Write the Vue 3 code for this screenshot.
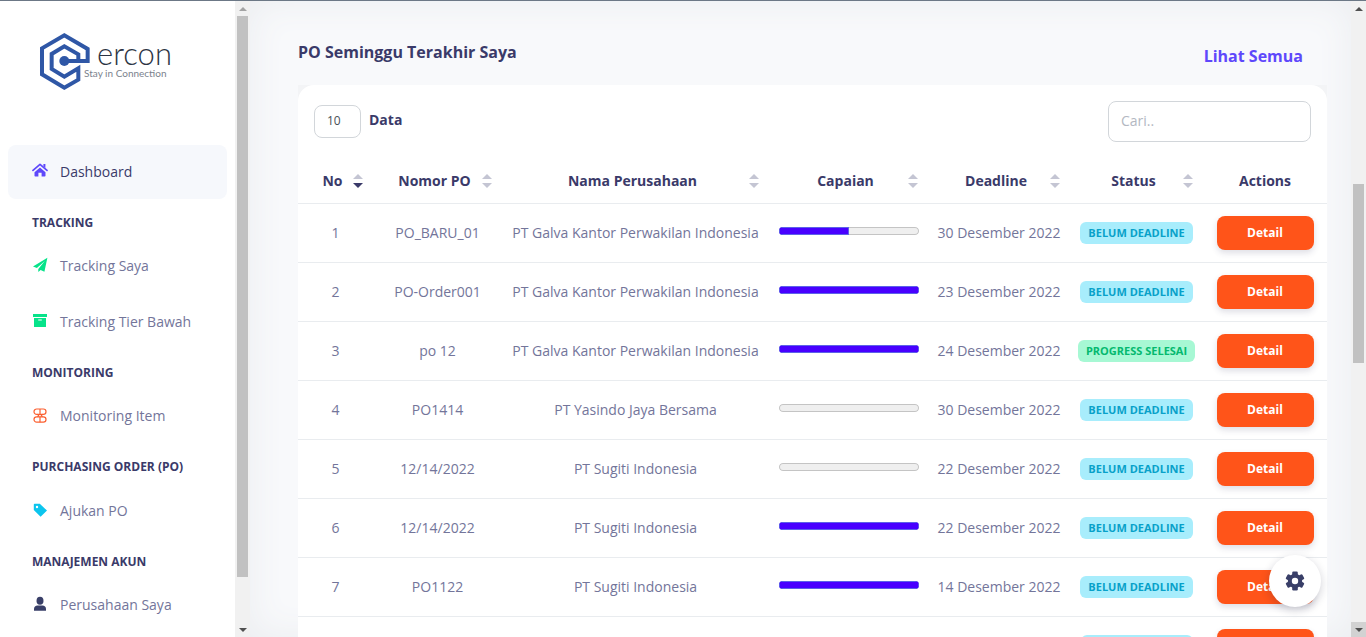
<script setup>
import { ref } from 'vue'

const pageSize = ref('10')
const search = ref('')

const groups = [
  { title: '', items: [{ label: 'Dashboard', icon: 'home', active: true }] },
  {
    title: 'Tracking',
    items: [
      { label: 'Tracking Saya', icon: 'plane' },
      { label: 'Tracking Tier Bawah', icon: 'box' },
    ],
  },
  { title: 'Monitoring', items: [{ label: 'Monitoring Item', icon: 'grid' }] },
  { title: 'Purchasing Order (PO)', items: [{ label: 'Ajukan PO', icon: 'tag' }] },
  { title: 'Manajemen Akun', items: [{ label: 'Perusahaan Saya', icon: 'user' }] },
]

const columns = [
  { key: 'no', label: 'No', sorted: true },
  { key: 'po', label: 'Nomor PO' },
  { key: 'company', label: 'Nama Perusahaan' },
  { key: 'progress', label: 'Capaian' },
  { key: 'deadline', label: 'Deadline' },
  { key: 'status', label: 'Status' },
  { key: 'actions', label: 'Actions', plain: true },
]

const galva = 'PT Galva Kantor Perwakilan Indonesia'
const rows = [
  { no: 1, po: 'PO_BARU_01', company: galva, value: 50, deadline: '30 Desember 2022' },
  { no: 2, po: 'PO-Order001', company: galva, value: 100, deadline: '23 Desember 2022' },
  { no: 3, po: 'po 12', company: galva, value: 100, deadline: '24 Desember 2022', done: true },
  { no: 4, po: 'PO1414', company: 'PT Yasindo Jaya Bersama', value: 0, deadline: '30 Desember 2022' },
  { no: 5, po: '12/14/2022', company: 'PT Sugiti Indonesia', value: 0, deadline: '22 Desember 2022' },
  { no: 6, po: '12/14/2022', company: 'PT Sugiti Indonesia', value: 100, deadline: '22 Desember 2022' },
  { no: 7, po: 'PO1122', company: 'PT Sugiti Indonesia', value: 100, deadline: '14 Desember 2022' },
]
</script>

<template>
  <div class="page">
    <aside class="sidebar">
      <div class="side-body">
        <a href="#" class="brand" aria-label="ercon">
          <svg width="132" height="58" viewBox="0 0 132 58">
            <g transform="translate(-20 -8) scale(0.3333)" fill="none" stroke="#2f57a6" stroke-width="12">
              <path d="M133 108H203V72L133 31L66 70V148L133 188L175 164V130L133 155L95 132V87L133 64L175 88V108" />
              <circle cx="133" cy="108" r="15" fill="#2f57a6" stroke="none" />
            </g>
            <text x="57" y="32" class="brand-name">ercon</text>
            <text x="44" y="44" class="brand-sub">Stay in Connection</text>
          </svg>
        </a>
        <nav class="menu">
          <section v-for="g in groups" :key="g.title" class="group">
            <h6 v-if="g.title">{{ g.title }}</h6>
            <a v-for="i in g.items" :key="i.label" href="#" class="item" :class="{ active: i.active }">
              <svg v-if="i.icon === 'home'" class="icon" viewBox="0 0 16 16" fill="#5e48fb">
                <path d="M8 4.600 13.500 9.200V12.800a.8.8 0 0 1-.8.8H9.600V9.800H6.400v3.800H3.300a.8.8 0 0 1-.8-.8V9.200z" />
                <path d="M11.400 1h2v4l-2-1.800z" />
                <path d="M1 7.400 8 1.400l7 6" fill="none" stroke="#5e48fb" stroke-width="1.700" stroke-linecap="round" stroke-linejoin="round" />
              </svg>
              <svg v-else-if="i.icon === 'plane'" class="icon" viewBox="0 0 16 16" fill="#06e38a">
                <path d="M15.400.8 1 9.400l3.900 1.600L12.800 4 6.300 12V15l2.300-2 3.800 1.700z" />
              </svg>
              <svg v-else-if="i.icon === 'box'" class="icon" viewBox="0 0 16 16" fill="#06e38a">
                <path d="M1 1h14v3H1zM2 5h12v8.500a.6.6 0 0 1-.6.6H2.600a.6.6 0 0 1-.6-.6zM6.200 6.600v1h3.600v-1z" fill-rule="evenodd" />
              </svg>
              <svg v-else-if="i.icon === 'grid'" class="icon" viewBox="0 0 16 16" fill="none" stroke="#fb6132" stroke-width="1.200">
                <rect x="2" y="2" width="12" height="5.400" rx="2.700" />
                <rect x="2" y="9.800" width="12" height="5.400" rx="2.700" />
                <path d="M8 2v5.400M8 9.800v5.400M5.400 7.400Q8 8.600 5.400 9.800M10.600 7.400Q8 8.600 10.600 9.800" />
              </svg>
              <svg v-else-if="i.icon === 'tag'" class="icon" viewBox="0 0 16 16" fill="#0cc5ee">
                <path d="M1.800 2.500a.8.8 0 0 1 .8-.8h5.200L15 8.600 8.600 14.800 1.800 8zM5 3.800a1.200 1.200 0 1 0 0 2.400 1.200 1.200 0 0 0 0-2.400z" fill-rule="evenodd" />
              </svg>
              <svg v-else class="icon" viewBox="0 0 16 16" fill="#393f68">
                <ellipse cx="8" cy="4.800" rx="3.500" ry="4" />
                <path d="M2 14.800v-2c0-2 1.500-3.300 3.500-3.300h5c2 0 3.500 1.300 3.500 3.300v2z" />
              </svg>
              <span>{{ i.label }}</span>
            </a>
          </section>
        </nav>
      </div>
      <div class="scroll side-scroll" aria-hidden="true">
        <i class="arrow up muted"></i>
        <div class="track"><div class="thumb"></div></div>
        <i class="arrow down"></i>
      </div>
    </aside>

    <main class="content">
      <header class="title-row">
        <h1>PO Seminggu Terakhir Saya</h1>
        <a href="#">Lihat Semua</a>
      </header>

      <div class="panel-wrap">
        <div class="panel">
          <div class="tools">
            <div class="length">
              <select id="page-size" v-model="pageSize">
                <option>10</option>
                <option>25</option>
                <option>50</option>
              </select>
              <label for="page-size">Data</label>
            </div>
            <input v-model="search" type="search" placeholder="Cari.." aria-label="Cari" />
          </div>

          <table>
            <colgroup>
              <col v-for="c in columns" :key="c.key" :class="'c-' + c.key" />
            </colgroup>
            <thead>
              <tr>
                <th v-for="c in columns" :key="c.key" scope="col" :class="{ plain: c.plain }">
                  {{ c.label }}
                  <span v-if="!c.plain" class="sort" :class="{ sorted: c.sorted }" aria-hidden="true"></span>
                </th>
              </tr>
            </thead>
            <tbody>
              <tr v-for="r in rows" :key="r.no">
                <td>{{ r.no }}</td>
                <td>{{ r.po }}</td>
                <td>{{ r.company }}</td>
                <td><progress :value="r.value" max="100" :aria-label="'Capaian ' + r.po"></progress></td>
                <td>{{ r.deadline }}</td>
                <td>
                  <span class="badge" :class="{ done: r.done }">{{ r.done ? 'Progress Selesai' : 'Belum Deadline' }}</span>
                </td>
                <td><button type="button" class="detail">Detail</button></td>
              </tr>
              <tr>
                <td></td>
                <td></td>
                <td></td>
                <td></td>
                <td></td>
                <td><span class="badge blank"></span></td>
                <td><button type="button" class="detail" aria-label="Detail"></button></td>
              </tr>
            </tbody>
          </table>
        </div>
      </div>
    </main>

    <div class="scroll page-scroll" aria-hidden="true">
      <i class="arrow up"></i>
      <div class="track"><div class="thumb"></div></div>
      <i class="arrow down pressed"></i>
    </div>

    <button type="button" class="settings" aria-label="Pengaturan">
      <svg width="20" height="20" viewBox="0 0 20 20">
        <g fill="#393f68">
          <rect v-for="a in [0, 60, 120]" :key="a" x="7.200" y="0.500" width="5.600" height="19" rx="1.200" :transform="`rotate(${a} 10 10)`" />
          <circle cx="10" cy="10" r="7.200" />
        </g>
        <circle cx="10" cy="10" r="3.200" fill="#fff" />
      </svg>
    </button>
  </div>
</template>

<style>
body {
  margin: 0;
  overflow: hidden;
}
</style>

<style scoped>
.page {
  box-sizing: border-box;
  display: flex;
  height: 100vh;
  overflow: hidden;
  border-top: 1px solid #6c7886;
  background: #f8f9fb;
  color: #73759a;
  font-family: "Open Sans", "Noto Sans", sans-serif;
  font-size: 14px;
  line-height: 20px;
}
a {
  text-decoration: none;
}
.sidebar {
  display: flex;
  flex: none;
  width: 250px;
  background: #fff;
}
.side-body {
  flex: 1;
  min-width: 0;
  overflow: hidden;
}
.brand {
  display: block;
  padding: 32px 0 54px 40px;
}
.brand svg {
  display: block;
  overflow: visible;
}
.brand-name {
  font: 300 31px Lato, sans-serif;
  fill: #2c3444;
}
.brand-sub {
  font: 400 10px Lato, sans-serif;
  fill: #7b828d;
}
.menu {
  padding: 0 8px;
}
.group h6 {
  margin: 0;
  padding: 14px 24px 7px;
  color: #3a3a69;
  font-size: 12px;
  font-weight: 700;
  line-height: 1.6;
  text-transform: uppercase;
}
.item {
  display: flex;
  align-items: center;
  gap: 12px;
  height: 54px;
  padding: 0 24px;
  border-radius: 8px;
  color: #73759a;
}
.item + .item {
  margin-top: 2px;
}
.item.active {
  background: #f6f8fc;
  color: #3a3a69;
  font-weight: 500;
}
.icon {
  flex: none;
  width: 16px;
  height: 16px;
  margin-bottom: 2px;
}
.scroll {
  display: flex;
  flex: none;
  flex-direction: column;
  width: 15px;
  background: #f1f1f1;
}
.arrow {
  display: flex;
  align-items: center;
  justify-content: center;
  height: 15px;
}
.arrow::before {
  content: "";
  border: 4px solid transparent;
}
.arrow.up::before {
  border-top: 0;
  border-bottom-color: #505050;
}
.arrow.down::before {
  border-bottom: 0;
  border-top-color: #505050;
}
.arrow.muted::before {
  border-bottom-color: #a3a3a3;
}
.arrow.pressed {
  background: #d2d2d2;
}
.track {
  flex: 1;
  padding: 0 2px;
}
.thumb {
  height: 92.5%;
  background: #c1c1c1;
}
.page-scroll .track {
  display: flex;
  flex-direction: column;
}
.page-scroll .thumb {
  height: 29.5%;
}
.page-scroll .track::before {
  content: "";
  height: 27.7%;
}
.content {
  flex: 1;
  min-width: 0;
  padding: 0 24px 0 48px;
  overflow: hidden;
  box-shadow: inset 0 0 36px #ebedf0;
}
.title-row {
  display: flex;
  align-items: flex-start;
  justify-content: space-between;
  height: 84px;
  padding-right: 24px;
  box-sizing: border-box;
  font-size: 16px;
  line-height: 24px;
}
.title-row h1 {
  margin: 39px 0 0;
  color: #3a3a69;
  font-size: 16px;
  font-weight: 700;
}
.title-row a {
  margin-top: 43px;
  color: #5e48fb;
  font-weight: 700;
}
.panel-wrap {
  background: #f3f4f6;
}
.panel {
  border-radius: 16px;
  background: #fff;
  overflow: hidden;
}
.tools {
  display: flex;
  align-items: flex-start;
  justify-content: space-between;
  padding: 16px 16px 0;
}
.length {
  display: flex;
  align-items: center;
  gap: 8px;
  padding-top: 4px;
}
.length select {
  box-sizing: border-box;
  width: 47px;
  height: 33px;
  padding: 0 12px 2px;
  border: 1px solid #d2d6da;
  border-radius: 8px;
  appearance: none;
  background: #fff;
  color: #495057;
  font: 12px "Open Sans", sans-serif;
}
.length label {
  padding-bottom: 3px;
  color: #3a3a69;
  font-weight: 700;
}
.tools input {
  box-sizing: border-box;
  width: 203px;
  height: 41px;
  padding: 0 12px 2px;
  border: 1px solid #d2d6da;
  border-radius: 8px;
  appearance: none;
  background: #fff;
  color: #495057;
  font: 14px "Open Sans", sans-serif;
}
.tools input::placeholder {
  color: #b3b8c2;
}
table {
  width: 100%;
  margin-top: 16px;
  border-collapse: separate;
  border-spacing: 0;
  table-layout: fixed;
}
.c-no { width: 75px; }
.c-po { width: 129px; }
.c-company { width: 267px; }
.c-progress { width: 159px; }
.c-deadline { width: 142px; }
.c-status { width: 133px; }
.c-actions { width: 124px; }
th {
  position: relative;
  height: 45px;
  padding: 0 30px 0 24px;
  border-bottom: 1px solid #e9ecef;
  color: #3a3a69;
  font-weight: 700;
  white-space: nowrap;
}
th.plain {
  padding: 0 10px;
}
.sort {
  position: absolute;
  top: 16px;
  right: 10px;
  display: flex;
  flex-direction: column;
  gap: 4px;
}
.sort::before,
.sort::after {
  content: "";
  border: 5px solid transparent;
}
.sort::before {
  border-top: 0;
  border-bottom-color: #c4c5d3;
}
.sort::after {
  border-bottom: 0;
  border-top-color: #c4c5d3;
}
.sort.sorted::after {
  border-top-color: #3a3a69;
}
td {
  height: 58px;
  padding: 0;
  border-bottom: 1px solid #e9ecef;
  text-align: center;
  white-space: nowrap;
}
progress {
  display: block;
  width: 140px;
  height: 8px;
  margin: 0 auto 4px;
  border: 0;
  border-radius: 4px;
  appearance: none;
  overflow: hidden;
}
progress::-webkit-progress-bar {
  border-radius: 4px;
  background: #efefef;
  box-shadow: inset 0 0 0 1px #c4c4c4;
}
progress::-webkit-progress-value {
  background: #4800ff;
  box-shadow: inset 0 0 0 1px #5c62e8;
}
.badge {
  display: inline-block;
  padding: 0 8px;
  border-radius: 6px;
  background: #a8edfc;
  color: #08a1c9;
  font-size: 11px;
  font-weight: 700;
  line-height: 22px;
  text-transform: uppercase;
}
.badge.done {
  background: #a7f8d4;
  color: #04b96f;
}
.badge.blank {
  box-sizing: border-box;
  width: 112px;
  height: 22px;
  vertical-align: middle;
}
.detail {
  display: block;
  width: 97px;
  height: 34px;
  margin: 0 auto;
  padding: 0 0 2px;
  border: 0;
  border-radius: 8px;
  background: #ff5419;
  box-shadow: 0 3px 6px rgba(50, 50, 93, 0.16);
  color: #fff;
  font: 700 12px "Open Sans", sans-serif;
}
.settings {
  position: fixed;
  right: 45px;
  bottom: 30px;
  display: flex;
  align-items: center;
  justify-content: center;
  width: 52px;
  height: 52px;
  padding: 0;
  border: 0;
  border-radius: 50%;
  background: #fff;
  box-shadow: 0 3px 10px rgba(20, 20, 50, 0.2);
}
</style>
